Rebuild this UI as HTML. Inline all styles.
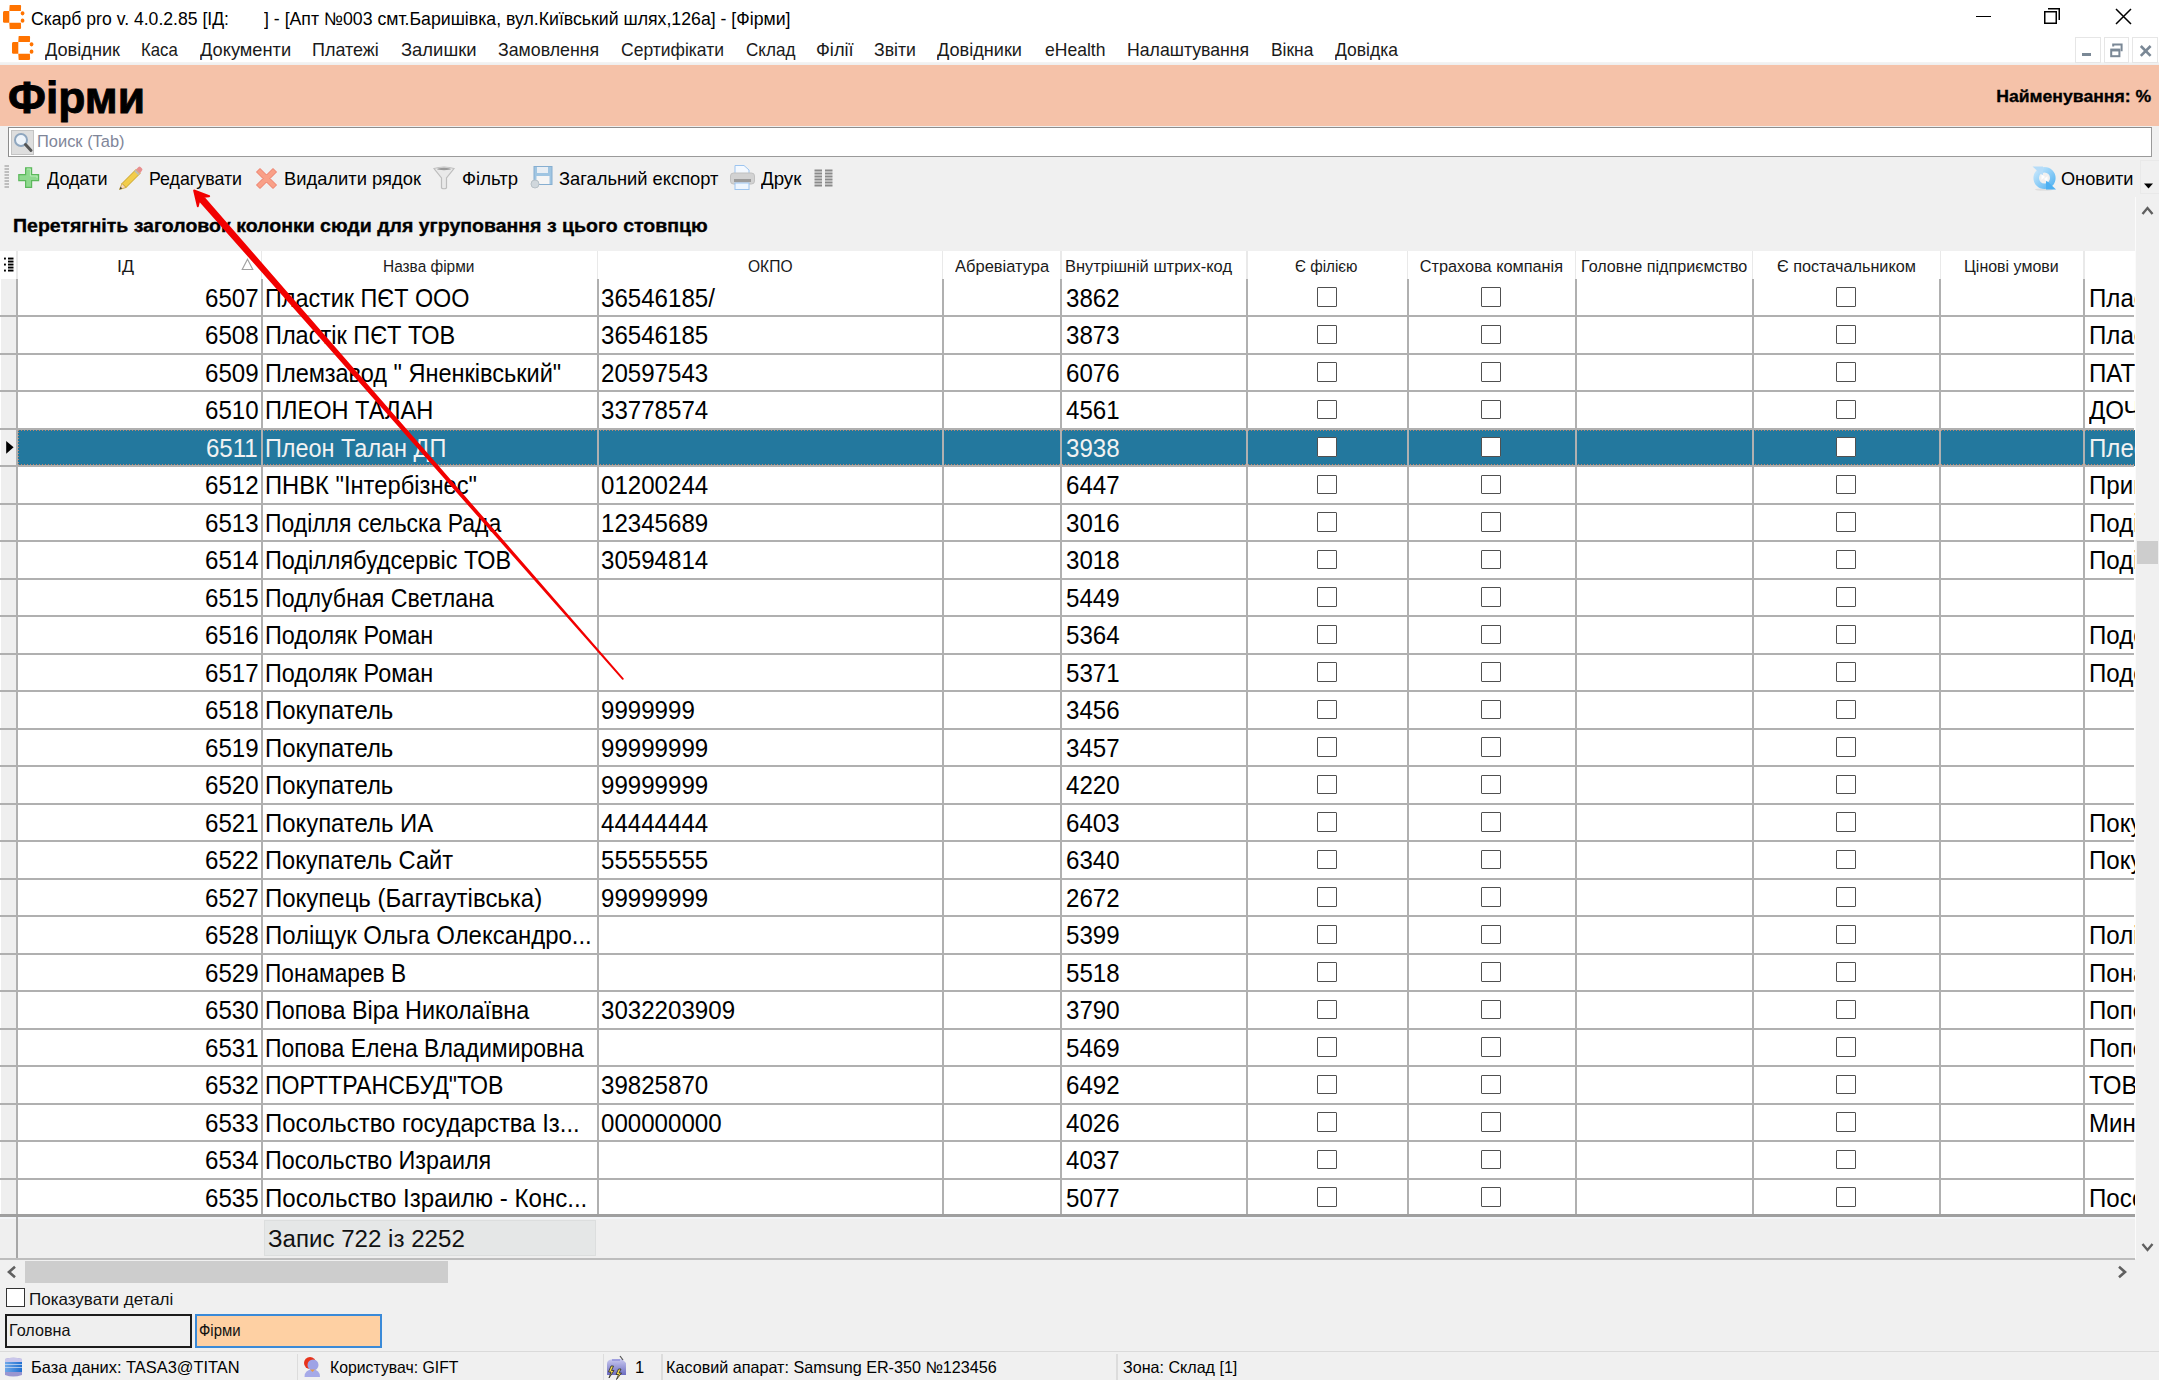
<!DOCTYPE html><html><head><meta charset="utf-8"><style>
*{margin:0;padding:0;box-sizing:border-box}html,body{width:2159px;height:1380px;overflow:hidden;background:#f0f0f0;font-family:"Liberation Sans",sans-serif}
.t{position:absolute;white-space:pre;line-height:1}
</style></head><body>
<div style="position:absolute;left:0px;top:0px;width:2159px;height:62px;background:#fff"></div>
<div style="position:absolute;left:0px;top:62px;width:2159px;height:3px;background:linear-gradient(#f4f4f4,#eeeeee)"></div>
<svg style="position:absolute;left:3.2px;top:4.9px" width="24" height="26" viewBox="0 0 24 26">
<g fill="#ff7300">
<path d="M6.6 0.6 Q6.3 0 7.2 0 H17.2 Q18.2 0 18.1 1 L17.9 6 H6.3 Z"/>
<path d="M6.3 6 V17.8 H1.2 Q0 17.8 0 16.2 V7.6 Q0 6 1.2 6 Z"/>
<path d="M6.3 17.8 H17.9 L18.1 22.8 Q18.2 23.9 17.2 23.9 H7.2 Q6.3 23.9 6.6 23 Z"/>
<rect x="17.7" y="6.2" width="3.7" height="4.2" rx="1.8"/>
<rect x="17.7" y="13.6" width="3.7" height="4.2" rx="1.8"/>
</g></svg>
<div style="position:absolute;left:1976px;top:16px;width:15px;height:1.2px;background:#000"></div>
<svg style="position:absolute;left:2040px;top:4px" width="26" height="24" viewBox="0 0 26 24">
<rect x="4.75" y="7.75" width="11.5" height="11.5" fill="none" stroke="#000" stroke-width="1.5"/>
<path d="M8 4.75 H19.25 V16" fill="none" stroke="#000" stroke-width="1.5"/></svg>
<svg style="position:absolute;left:2112px;top:5px" width="24" height="24" viewBox="0 0 24 24">
<path d="M4 4 L19 19 M19 4 L4 19" stroke="#000" stroke-width="1.5"/></svg>
<svg style="position:absolute;left:11.8px;top:36.4px" width="24" height="26" viewBox="0 0 24 26">
<g fill="#ff7300">
<path d="M6.6 0.6 Q6.3 0 7.2 0 H17.2 Q18.2 0 18.1 1 L17.9 6 H6.3 Z"/>
<path d="M6.3 6 V17.8 H1.2 Q0 17.8 0 16.2 V7.6 Q0 6 1.2 6 Z"/>
<path d="M6.3 17.8 H17.9 L18.1 22.8 Q18.2 23.9 17.2 23.9 H7.2 Q6.3 23.9 6.6 23 Z"/>
<rect x="17.7" y="6.2" width="3.7" height="4.2" rx="1.8"/>
<rect x="17.7" y="13.6" width="3.7" height="4.2" rx="1.8"/>
</g></svg>
<div style="position:absolute;left:2075.2px;top:37.4px;width:25.5px;height:25.2px;border:1.5px solid #e6e6e6;background:#fff"></div>
<div style="position:absolute;left:2103.6px;top:37.4px;width:25.5px;height:25.2px;border:1.5px solid #e6e6e6;background:#fff"></div>
<div style="position:absolute;left:2132.2px;top:37.4px;width:25.5px;height:25.2px;border:1.5px solid #e6e6e6;background:#fff"></div>
<div style="position:absolute;left:2082px;top:53px;width:9px;height:2.8px;background:#7a8896"></div>
<svg style="position:absolute;left:2108px;top:42px" width="18" height="16" viewBox="0 0 18 16">
<g fill="none" stroke="#7a8896">
<path d="M5.2 4.5 V2.6 H13.6 V9.2" stroke-width="2"/>
<rect x="3.2" y="7.6" width="8.2" height="6.6" stroke-width="2"/>
<path d="M3.2 8.2 H11.4" stroke-width="2.5"/></g></svg>
<svg style="position:absolute;left:2138px;top:44px" width="16" height="14" viewBox="0 0 16 14">
<path d="M2.8 2 L12.6 11.8 M12.6 2 L2.8 11.8" stroke="#7a8896" stroke-width="2.6"/></svg>
<div style="position:absolute;left:0px;top:65px;width:2159px;height:61px;background:#f5c2a9"></div>
<div style="position:absolute;left:8px;top:126.8px;width:2144px;height:30px;background:#fff;border:1.5px solid #8c8c8c;border-right-color:#9a9a9a;border-bottom-color:#9a9a9a"></div>
<div style="position:absolute;left:11px;top:130px;width:23px;height:25px;background:#dedede;border:1px solid #c4c4c4"></div>
<svg style="position:absolute;left:12px;top:131px" width="22" height="23" viewBox="0 0 22 23">
<circle cx="9" cy="9" r="6" fill="#eef4fb" stroke="#8ea6bf" stroke-width="2"/>
<path d="M13.5 13.5 L19 19.5" stroke="#555" stroke-width="3" stroke-linecap="round"/></svg>
<svg style="position:absolute;left:4px;top:165px" width="6" height="24" viewBox="0 0 6 24">
<g stroke="#a3a3a3" stroke-width="1.3"><path d="M0.5 1 H5"/><path d="M0.5 4 H5"/><path d="M0.5 7 H5"/><path d="M0.5 10 H5"/><path d="M0.5 13 H5"/><path d="M0.5 16 H5"/><path d="M0.5 19 H5"/><path d="M0.5 22 H5"/></g></svg>
<svg style="position:absolute;left:17.7px;top:167px" width="22" height="22" viewBox="0 0 22 22">
<path d="M7.6 0.8 H13.6 V7.6 H20.6 V13.6 H13.6 V20.4 H7.6 V13.6 H0.8 V7.6 H7.6 Z" fill="#8fd98f" stroke="#5cb85c" stroke-width="1.2"/>
<path d="M9 2 H12.4 V9 H19 V11" fill="none" stroke="#b7ecb7" stroke-width="1"/></svg>
<svg style="position:absolute;left:118px;top:165px" width="26" height="26" viewBox="0 0 26 26">
<path d="M4 18.5 L18 4.5 L22 8.5 L8 22.5 Z" fill="#f2cd4b" stroke="#c9a227" stroke-width="1"/>
<path d="M18 4.5 L20.5 2 Q21.5 1 22.5 2 L24 3.5 Q25 4.5 24 5.5 L22 8.5 Z" fill="#e88f8f"/>
<path d="M17 5.5 L21 9.5" stroke="#bbb" stroke-width="2"/>
<path d="M4 18.5 L1.5 24.5 L8 22.5 Z" fill="#f6d7c0" stroke="#c9a227" stroke-width="0.8"/>
<path d="M1.5 24.5 L2.6 21.8 L4.3 23.4 Z" fill="#444"/></svg>
<svg style="position:absolute;left:254.5px;top:166.5px" width="23" height="23" viewBox="0 0 23 23">
<path d="M1.5 5 L5 1.5 L11.5 8 L18 1.5 L21.5 5 L15 11.5 L21.5 18 L18 21.5 L11.5 15 L5 21.5 L1.5 18 L8 11.5 Z" fill="#f9a087" stroke="#ee7a66" stroke-width="1" stroke-linejoin="round"/></svg>
<svg style="position:absolute;left:433px;top:166px" width="22" height="24" viewBox="0 0 22 24">
<path d="M1 2.5 Q11 -0.5 21 2.5 L13.5 12 V22 Q11 23.5 8.5 22 V12 Z" fill="#e9e9e9" stroke="#bdbdbd" stroke-width="1.2"/>
<ellipse cx="11" cy="3" rx="7" ry="1.2" fill="#9a9a9a"/></svg>
<svg style="position:absolute;left:530px;top:166px" width="23" height="24" viewBox="0 0 23 24">
<rect x="4" y="0.5" width="18" height="18" fill="#9fc5e2" stroke="#86aed0" stroke-width="1"/>
<rect x="7" y="1" width="11" height="6" fill="#e8eef4"/>
<rect x="6.5" y="10" width="13" height="8" fill="#f5f5f5"/>
<circle cx="5" cy="18" r="4" fill="#d0d7dc" stroke="#b7c0c6"/></svg>
<svg style="position:absolute;left:730px;top:165px" width="25" height="26" viewBox="0 0 25 26">
<path d="M5 0.5 H14 L19 5 V10 H5 Z" fill="#f4f9ff" stroke="#9cc4ef" stroke-width="1"/>
<rect x="0.5" y="8" width="24" height="11" rx="3" fill="#d2d2d2" stroke="#c0c0c0"/>
<rect x="4" y="14" width="17" height="3" fill="#9b9b9b"/>
<rect x="5" y="18" width="14" height="6.5" fill="#eef6ff" stroke="#9cc4ef"/></svg>
<svg style="position:absolute;left:814px;top:169px" width="20" height="19" viewBox="0 0 20 19">
<g stroke="#8a8a8a" stroke-width="1.8"><path d="M0.5 1.5 H8 M11 1.5 H18.5"/><path d="M0.5 4.5 H8 M11 4.5 H18.5"/><path d="M0.5 7.5 H8 M11 7.5 H18.5"/><path d="M0.5 10.5 H8 M11 10.5 H18.5"/><path d="M0.5 13.5 H8 M11 13.5 H18.5"/><path d="M0.5 16.5 H8 M11 16.5 H18.5"/></g></svg>
<svg style="position:absolute;left:2031px;top:165px" width="26" height="26" viewBox="0 0 26 26">
<defs><linearGradient id="rfg" x1="0" y1="0" x2="1" y2="1"><stop offset="0" stop-color="#c4e6fc"/><stop offset="1" stop-color="#5ab6f2"/></linearGradient></defs>
<ellipse cx="13" cy="24.6" rx="9" ry="1.1" fill="#dedede"/>
<circle cx="13.5" cy="13" r="8.3" fill="none" stroke="url(#rfg)" stroke-width="5.6"/>
<path d="M1.5 1.5 H12 V11 Z" fill="#b5dcf8"/>
<path d="M25 24.5 H15 V15 Z" fill="#4cb0f2"/>
<path d="M10.5 9 L14 12 L10.5 15 Z" fill="#fff" opacity="0.9"/>
<path d="M16.5 11 L13 14 L16.5 17 Z" fill="#fff" opacity="0.9"/></svg>
<div style="position:absolute;left:2140px;top:160px;width:19px;height:34px;border:1px solid #e9e9e9;border-right:none"></div>
<svg style="position:absolute;left:2143px;top:182px" width="11" height="8" viewBox="0 0 11 8"><path d="M1 1.5 H10 L5.5 6.5 Z" fill="#000"/></svg>
<div style="position:absolute;left:0px;top:250.8px;width:2135.3px;height:28.099999999999966px;background:#fff"></div>
<div style="position:absolute;left:16.4px;top:250.8px;width:1.6px;height:28.099999999999966px;background:#e9e9e9"></div>
<div style="position:absolute;left:260.9px;top:250.8px;width:1.6px;height:28.099999999999966px;background:#e9e9e9"></div>
<div style="position:absolute;left:596.8000000000001px;top:250.8px;width:1.6px;height:28.099999999999966px;background:#e9e9e9"></div>
<div style="position:absolute;left:941.8000000000001px;top:250.8px;width:1.6px;height:28.099999999999966px;background:#e9e9e9"></div>
<div style="position:absolute;left:1060.4px;top:250.8px;width:1.6px;height:28.099999999999966px;background:#e9e9e9"></div>
<div style="position:absolute;left:1246.3px;top:250.8px;width:1.6px;height:28.099999999999966px;background:#e9e9e9"></div>
<div style="position:absolute;left:1406.9px;top:250.8px;width:1.6px;height:28.099999999999966px;background:#e9e9e9"></div>
<div style="position:absolute;left:1574.9px;top:250.8px;width:1.6px;height:28.099999999999966px;background:#e9e9e9"></div>
<div style="position:absolute;left:1751.9px;top:250.8px;width:1.6px;height:28.099999999999966px;background:#e9e9e9"></div>
<div style="position:absolute;left:1939.5px;top:250.8px;width:1.6px;height:28.099999999999966px;background:#e9e9e9"></div>
<div style="position:absolute;left:2083.3999999999996px;top:250.8px;width:1.6px;height:28.099999999999966px;background:#e9e9e9"></div>
<svg style="position:absolute;left:0px;top:255px" width="16" height="20" viewBox="0 0 16 20">
<g fill="#000"><rect x="8" y="2.6" width="5.5" height="1.9"/><rect x="8" y="5.6" width="5.5" height="1.9"/><rect x="8" y="8.6" width="5.5" height="1.9"/><rect x="8" y="11.6" width="5.5" height="1.9"/><rect x="8" y="14.6" width="5.5" height="1.9"/><rect x="4" y="2.6" width="1.9" height="1.9"/><rect x="4" y="8.6" width="1.9" height="1.9"/><rect x="4" y="14.6" width="1.9" height="1.9"/></g></svg>
<svg style="position:absolute;left:240.5px;top:258px" width="13" height="13" viewBox="0 0 13 13">
<path d="M6.5 1.2 L11.8 11.5 H1.2 Z" fill="#fff" stroke="#a0a0a0" stroke-width="1.1"/></svg>
<div style="position:absolute;left:0px;top:278.9px;width:2135.3px;height:937.5000000000001px;background:#fff"></div>
<div style="position:absolute;left:1.2px;top:278.9px;width:15.2px;height:937.5000000000001px;background:#efefef"></div>
<div style="position:absolute;left:18.0px;top:429.7px;width:2117.3px;height:35.9px;background:#23789e"></div>
<div style="position:absolute;left:17.8px;top:429.4px;width:2117.5px;height:1.6px;background:repeating-linear-gradient(90deg,#c4876a 0 1.4px,transparent 1.4px 3px)"></div>
<div style="position:absolute;left:17.8px;top:464.29999999999995px;width:2117.5px;height:1.6px;background:repeating-linear-gradient(90deg,#c4876a 0 1.4px,transparent 1.4px 3px)"></div>
<div style="position:absolute;left:17.8px;top:429.4px;width:1.6px;height:36.5px;background:repeating-linear-gradient(180deg,#c4876a 0 1.4px,transparent 1.4px 3px)"></div>
<div style="position:absolute;left:0px;top:315px;width:2134.3px;height:2px;background:#b0b0b0"></div>
<div style="position:absolute;left:0px;top:353px;width:2134.3px;height:2px;background:#b0b0b0"></div>
<div style="position:absolute;left:0px;top:390px;width:2134.3px;height:2px;background:#b0b0b0"></div>
<div style="position:absolute;left:0px;top:428px;width:2134.3px;height:2px;background:#b0b0b0"></div>
<div style="position:absolute;left:0px;top:465px;width:2134.3px;height:2px;background:#b0b0b0"></div>
<div style="position:absolute;left:0px;top:503px;width:2134.3px;height:2px;background:#b0b0b0"></div>
<div style="position:absolute;left:0px;top:540px;width:2134.3px;height:2px;background:#b0b0b0"></div>
<div style="position:absolute;left:0px;top:578px;width:2134.3px;height:2px;background:#b0b0b0"></div>
<div style="position:absolute;left:0px;top:615px;width:2134.3px;height:2px;background:#b0b0b0"></div>
<div style="position:absolute;left:0px;top:653px;width:2134.3px;height:2px;background:#b0b0b0"></div>
<div style="position:absolute;left:0px;top:690px;width:2134.3px;height:2px;background:#b0b0b0"></div>
<div style="position:absolute;left:0px;top:728px;width:2134.3px;height:2px;background:#b0b0b0"></div>
<div style="position:absolute;left:0px;top:765px;width:2134.3px;height:2px;background:#b0b0b0"></div>
<div style="position:absolute;left:0px;top:803px;width:2134.3px;height:2px;background:#b0b0b0"></div>
<div style="position:absolute;left:0px;top:840px;width:2134.3px;height:2px;background:#b0b0b0"></div>
<div style="position:absolute;left:0px;top:878px;width:2134.3px;height:2px;background:#b0b0b0"></div>
<div style="position:absolute;left:0px;top:915px;width:2134.3px;height:2px;background:#b0b0b0"></div>
<div style="position:absolute;left:0px;top:953px;width:2134.3px;height:2px;background:#b0b0b0"></div>
<div style="position:absolute;left:0px;top:990px;width:2134.3px;height:2px;background:#b0b0b0"></div>
<div style="position:absolute;left:0px;top:1028px;width:2134.3px;height:2px;background:#b0b0b0"></div>
<div style="position:absolute;left:0px;top:1065px;width:2134.3px;height:2px;background:#b0b0b0"></div>
<div style="position:absolute;left:0px;top:1103px;width:2134.3px;height:2px;background:#b0b0b0"></div>
<div style="position:absolute;left:0px;top:1140px;width:2134.3px;height:2px;background:#b0b0b0"></div>
<div style="position:absolute;left:0px;top:1178px;width:2134.3px;height:2px;background:#b0b0b0"></div>
<div style="position:absolute;left:16px;top:278.9px;width:2px;height:937.5000000000001px;background:#b0b0b0"></div>
<div style="position:absolute;left:261px;top:278.9px;width:2px;height:937.5000000000001px;background:#b0b0b0"></div>
<div style="position:absolute;left:597px;top:278.9px;width:2px;height:937.5000000000001px;background:#b0b0b0"></div>
<div style="position:absolute;left:942px;top:278.9px;width:2px;height:937.5000000000001px;background:#b0b0b0"></div>
<div style="position:absolute;left:1060px;top:278.9px;width:2px;height:937.5000000000001px;background:#b0b0b0"></div>
<div style="position:absolute;left:1246px;top:278.9px;width:2px;height:937.5000000000001px;background:#b0b0b0"></div>
<div style="position:absolute;left:1407px;top:278.9px;width:2px;height:937.5000000000001px;background:#b0b0b0"></div>
<div style="position:absolute;left:1575px;top:278.9px;width:2px;height:937.5000000000001px;background:#b0b0b0"></div>
<div style="position:absolute;left:1752px;top:278.9px;width:2px;height:937.5000000000001px;background:#b0b0b0"></div>
<div style="position:absolute;left:1939px;top:278.9px;width:2px;height:937.5000000000001px;background:#b0b0b0"></div>
<div style="position:absolute;left:2083px;top:278.9px;width:2px;height:937.5000000000001px;background:#b0b0b0"></div>
<div style="position:absolute;left:0px;top:1213.9px;width:2135.3px;height:3.4px;background:#9f9f9f"></div>
<svg style="position:absolute;left:5px;top:440.4px" width="10" height="15" viewBox="0 0 10 15">
<path d="M1.2 1 L8.6 7.3 L1.2 13.8 Z" fill="#000"/></svg>
<div style="position:absolute;left:2084px;top:278.9px;width:51.3px;height:37.5px;overflow:hidden"><div class="t" style="left:4.8px;top:6.70px;font-size:25px;color:#000;transform:scaleX(0.964);transform-origin:0 0">Пластик</div></div>
<div style="position:absolute;left:1317.15px;top:287.0px;width:19.5px;height:19.5px;border:1.9px solid #505050;background:#fff;border-radius:1px"></div>
<div style="position:absolute;left:1481.45px;top:287.0px;width:19.5px;height:19.5px;border:1.9px solid #505050;background:#fff;border-radius:1px"></div>
<div style="position:absolute;left:1836.25px;top:287.0px;width:19.5px;height:19.5px;border:1.9px solid #505050;background:#fff;border-radius:1px"></div>
<div style="position:absolute;left:2084px;top:316.4px;width:51.3px;height:37.5px;overflow:hidden"><div class="t" style="left:4.8px;top:6.70px;font-size:25px;color:#000;transform:scaleX(0.964);transform-origin:0 0">Пластік</div></div>
<div style="position:absolute;left:1317.15px;top:324.5px;width:19.5px;height:19.5px;border:1.9px solid #505050;background:#fff;border-radius:1px"></div>
<div style="position:absolute;left:1481.45px;top:324.5px;width:19.5px;height:19.5px;border:1.9px solid #505050;background:#fff;border-radius:1px"></div>
<div style="position:absolute;left:1836.25px;top:324.5px;width:19.5px;height:19.5px;border:1.9px solid #505050;background:#fff;border-radius:1px"></div>
<div style="position:absolute;left:2084px;top:353.9px;width:51.3px;height:37.5px;overflow:hidden"><div class="t" style="left:4.8px;top:6.70px;font-size:25px;color:#000;transform:scaleX(0.964);transform-origin:0 0">ПАТ</div></div>
<div style="position:absolute;left:1317.15px;top:362.0px;width:19.5px;height:19.5px;border:1.9px solid #505050;background:#fff;border-radius:1px"></div>
<div style="position:absolute;left:1481.45px;top:362.0px;width:19.5px;height:19.5px;border:1.9px solid #505050;background:#fff;border-radius:1px"></div>
<div style="position:absolute;left:1836.25px;top:362.0px;width:19.5px;height:19.5px;border:1.9px solid #505050;background:#fff;border-radius:1px"></div>
<div style="position:absolute;left:2084px;top:391.4px;width:51.3px;height:37.5px;overflow:hidden"><div class="t" style="left:4.8px;top:6.70px;font-size:25px;color:#000;transform:scaleX(0.964);transform-origin:0 0">ДОЧ</div></div>
<div style="position:absolute;left:1317.15px;top:399.5px;width:19.5px;height:19.5px;border:1.9px solid #505050;background:#fff;border-radius:1px"></div>
<div style="position:absolute;left:1481.45px;top:399.5px;width:19.5px;height:19.5px;border:1.9px solid #505050;background:#fff;border-radius:1px"></div>
<div style="position:absolute;left:1836.25px;top:399.5px;width:19.5px;height:19.5px;border:1.9px solid #505050;background:#fff;border-radius:1px"></div>
<div style="position:absolute;left:2084px;top:428.9px;width:51.3px;height:37.5px;overflow:hidden"><div class="t" style="left:4.8px;top:6.70px;font-size:25px;color:#f2f2f2;transform:scaleX(0.964);transform-origin:0 0">Плеон</div></div>
<div style="position:absolute;left:1317.15px;top:437.0px;width:19.5px;height:19.5px;border:1.9px solid #505050;background:#fff;border-radius:1px"></div>
<div style="position:absolute;left:1481.45px;top:437.0px;width:19.5px;height:19.5px;border:1.9px solid #505050;background:#fff;border-radius:1px"></div>
<div style="position:absolute;left:1836.25px;top:437.0px;width:19.5px;height:19.5px;border:1.9px solid #505050;background:#fff;border-radius:1px"></div>
<div style="position:absolute;left:2084px;top:466.4px;width:51.3px;height:37.5px;overflow:hidden"><div class="t" style="left:4.8px;top:6.70px;font-size:25px;color:#000;transform:scaleX(0.964);transform-origin:0 0">Приват</div></div>
<div style="position:absolute;left:1317.15px;top:474.5px;width:19.5px;height:19.5px;border:1.9px solid #505050;background:#fff;border-radius:1px"></div>
<div style="position:absolute;left:1481.45px;top:474.5px;width:19.5px;height:19.5px;border:1.9px solid #505050;background:#fff;border-radius:1px"></div>
<div style="position:absolute;left:1836.25px;top:474.5px;width:19.5px;height:19.5px;border:1.9px solid #505050;background:#fff;border-radius:1px"></div>
<div style="position:absolute;left:2084px;top:503.9px;width:51.3px;height:37.5px;overflow:hidden"><div class="t" style="left:4.8px;top:6.70px;font-size:25px;color:#000;transform:scaleX(0.964);transform-origin:0 0">Поділля</div></div>
<div style="position:absolute;left:1317.15px;top:512.0px;width:19.5px;height:19.5px;border:1.9px solid #505050;background:#fff;border-radius:1px"></div>
<div style="position:absolute;left:1481.45px;top:512.0px;width:19.5px;height:19.5px;border:1.9px solid #505050;background:#fff;border-radius:1px"></div>
<div style="position:absolute;left:1836.25px;top:512.0px;width:19.5px;height:19.5px;border:1.9px solid #505050;background:#fff;border-radius:1px"></div>
<div style="position:absolute;left:2084px;top:541.4px;width:51.3px;height:37.5px;overflow:hidden"><div class="t" style="left:4.8px;top:6.70px;font-size:25px;color:#000;transform:scaleX(0.964);transform-origin:0 0">Поділля</div></div>
<div style="position:absolute;left:1317.15px;top:549.5px;width:19.5px;height:19.5px;border:1.9px solid #505050;background:#fff;border-radius:1px"></div>
<div style="position:absolute;left:1481.45px;top:549.5px;width:19.5px;height:19.5px;border:1.9px solid #505050;background:#fff;border-radius:1px"></div>
<div style="position:absolute;left:1836.25px;top:549.5px;width:19.5px;height:19.5px;border:1.9px solid #505050;background:#fff;border-radius:1px"></div>
<div style="position:absolute;left:1317.15px;top:587.0px;width:19.5px;height:19.5px;border:1.9px solid #505050;background:#fff;border-radius:1px"></div>
<div style="position:absolute;left:1481.45px;top:587.0px;width:19.5px;height:19.5px;border:1.9px solid #505050;background:#fff;border-radius:1px"></div>
<div style="position:absolute;left:1836.25px;top:587.0px;width:19.5px;height:19.5px;border:1.9px solid #505050;background:#fff;border-radius:1px"></div>
<div style="position:absolute;left:2084px;top:616.4px;width:51.3px;height:37.5px;overflow:hidden"><div class="t" style="left:4.8px;top:6.70px;font-size:25px;color:#000;transform:scaleX(0.964);transform-origin:0 0">Подоляк</div></div>
<div style="position:absolute;left:1317.15px;top:624.5px;width:19.5px;height:19.5px;border:1.9px solid #505050;background:#fff;border-radius:1px"></div>
<div style="position:absolute;left:1481.45px;top:624.5px;width:19.5px;height:19.5px;border:1.9px solid #505050;background:#fff;border-radius:1px"></div>
<div style="position:absolute;left:1836.25px;top:624.5px;width:19.5px;height:19.5px;border:1.9px solid #505050;background:#fff;border-radius:1px"></div>
<div style="position:absolute;left:2084px;top:653.9px;width:51.3px;height:37.5px;overflow:hidden"><div class="t" style="left:4.8px;top:6.70px;font-size:25px;color:#000;transform:scaleX(0.964);transform-origin:0 0">Подоляк</div></div>
<div style="position:absolute;left:1317.15px;top:662.0px;width:19.5px;height:19.5px;border:1.9px solid #505050;background:#fff;border-radius:1px"></div>
<div style="position:absolute;left:1481.45px;top:662.0px;width:19.5px;height:19.5px;border:1.9px solid #505050;background:#fff;border-radius:1px"></div>
<div style="position:absolute;left:1836.25px;top:662.0px;width:19.5px;height:19.5px;border:1.9px solid #505050;background:#fff;border-radius:1px"></div>
<div style="position:absolute;left:1317.15px;top:699.5px;width:19.5px;height:19.5px;border:1.9px solid #505050;background:#fff;border-radius:1px"></div>
<div style="position:absolute;left:1481.45px;top:699.5px;width:19.5px;height:19.5px;border:1.9px solid #505050;background:#fff;border-radius:1px"></div>
<div style="position:absolute;left:1836.25px;top:699.5px;width:19.5px;height:19.5px;border:1.9px solid #505050;background:#fff;border-radius:1px"></div>
<div style="position:absolute;left:1317.15px;top:737.0px;width:19.5px;height:19.5px;border:1.9px solid #505050;background:#fff;border-radius:1px"></div>
<div style="position:absolute;left:1481.45px;top:737.0px;width:19.5px;height:19.5px;border:1.9px solid #505050;background:#fff;border-radius:1px"></div>
<div style="position:absolute;left:1836.25px;top:737.0px;width:19.5px;height:19.5px;border:1.9px solid #505050;background:#fff;border-radius:1px"></div>
<div style="position:absolute;left:1317.15px;top:774.5px;width:19.5px;height:19.5px;border:1.9px solid #505050;background:#fff;border-radius:1px"></div>
<div style="position:absolute;left:1481.45px;top:774.5px;width:19.5px;height:19.5px;border:1.9px solid #505050;background:#fff;border-radius:1px"></div>
<div style="position:absolute;left:1836.25px;top:774.5px;width:19.5px;height:19.5px;border:1.9px solid #505050;background:#fff;border-radius:1px"></div>
<div style="position:absolute;left:2084px;top:803.9px;width:51.3px;height:37.5px;overflow:hidden"><div class="t" style="left:4.8px;top:6.70px;font-size:25px;color:#000;transform:scaleX(0.964);transform-origin:0 0">Покупатель</div></div>
<div style="position:absolute;left:1317.15px;top:812.0px;width:19.5px;height:19.5px;border:1.9px solid #505050;background:#fff;border-radius:1px"></div>
<div style="position:absolute;left:1481.45px;top:812.0px;width:19.5px;height:19.5px;border:1.9px solid #505050;background:#fff;border-radius:1px"></div>
<div style="position:absolute;left:1836.25px;top:812.0px;width:19.5px;height:19.5px;border:1.9px solid #505050;background:#fff;border-radius:1px"></div>
<div style="position:absolute;left:2084px;top:841.4px;width:51.3px;height:37.5px;overflow:hidden"><div class="t" style="left:4.8px;top:6.70px;font-size:25px;color:#000;transform:scaleX(0.964);transform-origin:0 0">Покупатель</div></div>
<div style="position:absolute;left:1317.15px;top:849.5px;width:19.5px;height:19.5px;border:1.9px solid #505050;background:#fff;border-radius:1px"></div>
<div style="position:absolute;left:1481.45px;top:849.5px;width:19.5px;height:19.5px;border:1.9px solid #505050;background:#fff;border-radius:1px"></div>
<div style="position:absolute;left:1836.25px;top:849.5px;width:19.5px;height:19.5px;border:1.9px solid #505050;background:#fff;border-radius:1px"></div>
<div style="position:absolute;left:1317.15px;top:887.0px;width:19.5px;height:19.5px;border:1.9px solid #505050;background:#fff;border-radius:1px"></div>
<div style="position:absolute;left:1481.45px;top:887.0px;width:19.5px;height:19.5px;border:1.9px solid #505050;background:#fff;border-radius:1px"></div>
<div style="position:absolute;left:1836.25px;top:887.0px;width:19.5px;height:19.5px;border:1.9px solid #505050;background:#fff;border-radius:1px"></div>
<div style="position:absolute;left:2084px;top:916.4px;width:51.3px;height:37.5px;overflow:hidden"><div class="t" style="left:4.8px;top:6.70px;font-size:25px;color:#000;transform:scaleX(0.964);transform-origin:0 0">Поліщук</div></div>
<div style="position:absolute;left:1317.15px;top:924.5px;width:19.5px;height:19.5px;border:1.9px solid #505050;background:#fff;border-radius:1px"></div>
<div style="position:absolute;left:1481.45px;top:924.5px;width:19.5px;height:19.5px;border:1.9px solid #505050;background:#fff;border-radius:1px"></div>
<div style="position:absolute;left:1836.25px;top:924.5px;width:19.5px;height:19.5px;border:1.9px solid #505050;background:#fff;border-radius:1px"></div>
<div style="position:absolute;left:2084px;top:953.9px;width:51.3px;height:37.5px;overflow:hidden"><div class="t" style="left:4.8px;top:6.70px;font-size:25px;color:#000;transform:scaleX(0.964);transform-origin:0 0">Понамарев</div></div>
<div style="position:absolute;left:1317.15px;top:962.0px;width:19.5px;height:19.5px;border:1.9px solid #505050;background:#fff;border-radius:1px"></div>
<div style="position:absolute;left:1481.45px;top:962.0px;width:19.5px;height:19.5px;border:1.9px solid #505050;background:#fff;border-radius:1px"></div>
<div style="position:absolute;left:1836.25px;top:962.0px;width:19.5px;height:19.5px;border:1.9px solid #505050;background:#fff;border-radius:1px"></div>
<div style="position:absolute;left:2084px;top:991.4px;width:51.3px;height:37.5px;overflow:hidden"><div class="t" style="left:4.8px;top:6.70px;font-size:25px;color:#000;transform:scaleX(0.964);transform-origin:0 0">Попова</div></div>
<div style="position:absolute;left:1317.15px;top:999.5px;width:19.5px;height:19.5px;border:1.9px solid #505050;background:#fff;border-radius:1px"></div>
<div style="position:absolute;left:1481.45px;top:999.5px;width:19.5px;height:19.5px;border:1.9px solid #505050;background:#fff;border-radius:1px"></div>
<div style="position:absolute;left:1836.25px;top:999.5px;width:19.5px;height:19.5px;border:1.9px solid #505050;background:#fff;border-radius:1px"></div>
<div style="position:absolute;left:2084px;top:1028.9px;width:51.3px;height:37.5px;overflow:hidden"><div class="t" style="left:4.8px;top:6.70px;font-size:25px;color:#000;transform:scaleX(0.964);transform-origin:0 0">Попова</div></div>
<div style="position:absolute;left:1317.15px;top:1037.0px;width:19.5px;height:19.5px;border:1.9px solid #505050;background:#fff;border-radius:1px"></div>
<div style="position:absolute;left:1481.45px;top:1037.0px;width:19.5px;height:19.5px;border:1.9px solid #505050;background:#fff;border-radius:1px"></div>
<div style="position:absolute;left:1836.25px;top:1037.0px;width:19.5px;height:19.5px;border:1.9px solid #505050;background:#fff;border-radius:1px"></div>
<div style="position:absolute;left:2084px;top:1066.4px;width:51.3px;height:37.5px;overflow:hidden"><div class="t" style="left:4.8px;top:6.70px;font-size:25px;color:#000;transform:scaleX(0.964);transform-origin:0 0">ТОВ</div></div>
<div style="position:absolute;left:1317.15px;top:1074.5px;width:19.5px;height:19.5px;border:1.9px solid #505050;background:#fff;border-radius:1px"></div>
<div style="position:absolute;left:1481.45px;top:1074.5px;width:19.5px;height:19.5px;border:1.9px solid #505050;background:#fff;border-radius:1px"></div>
<div style="position:absolute;left:1836.25px;top:1074.5px;width:19.5px;height:19.5px;border:1.9px solid #505050;background:#fff;border-radius:1px"></div>
<div style="position:absolute;left:2084px;top:1103.9px;width:51.3px;height:37.5px;overflow:hidden"><div class="t" style="left:4.8px;top:6.70px;font-size:25px;color:#000;transform:scaleX(0.964);transform-origin:0 0">Министерство</div></div>
<div style="position:absolute;left:1317.15px;top:1112.0px;width:19.5px;height:19.5px;border:1.9px solid #505050;background:#fff;border-radius:1px"></div>
<div style="position:absolute;left:1481.45px;top:1112.0px;width:19.5px;height:19.5px;border:1.9px solid #505050;background:#fff;border-radius:1px"></div>
<div style="position:absolute;left:1836.25px;top:1112.0px;width:19.5px;height:19.5px;border:1.9px solid #505050;background:#fff;border-radius:1px"></div>
<div style="position:absolute;left:1317.15px;top:1149.5px;width:19.5px;height:19.5px;border:1.9px solid #505050;background:#fff;border-radius:1px"></div>
<div style="position:absolute;left:1481.45px;top:1149.5px;width:19.5px;height:19.5px;border:1.9px solid #505050;background:#fff;border-radius:1px"></div>
<div style="position:absolute;left:1836.25px;top:1149.5px;width:19.5px;height:19.5px;border:1.9px solid #505050;background:#fff;border-radius:1px"></div>
<div style="position:absolute;left:2084px;top:1178.9px;width:51.3px;height:37.5px;overflow:hidden"><div class="t" style="left:4.8px;top:6.70px;font-size:25px;color:#000;transform:scaleX(0.964);transform-origin:0 0">Посольство</div></div>
<div style="position:absolute;left:1317.15px;top:1187.0px;width:19.5px;height:19.5px;border:1.9px solid #505050;background:#fff;border-radius:1px"></div>
<div style="position:absolute;left:1481.45px;top:1187.0px;width:19.5px;height:19.5px;border:1.9px solid #505050;background:#fff;border-radius:1px"></div>
<div style="position:absolute;left:1836.25px;top:1187.0px;width:19.5px;height:19.5px;border:1.9px solid #505050;background:#fff;border-radius:1px"></div>
<div style="position:absolute;left:2135.3px;top:197.4px;width:23.699999999999818px;height:1061.6px;background:#f0f0f0;border-left:1px solid #fbfbfb"></div>
<svg style="position:absolute;left:2141px;top:205px" width="13" height="11" viewBox="0 0 13 11">
<path d="M1.5 9 L6.5 3 L11.5 9" fill="none" stroke="#606060" stroke-width="2.4"/></svg>
<svg style="position:absolute;left:2141px;top:1241.5px" width="13" height="11" viewBox="0 0 13 11">
<path d="M1.5 2 L6.5 8 L11.5 2" fill="none" stroke="#606060" stroke-width="2.4"/></svg>
<div style="position:absolute;left:2136.5px;top:541px;width:21.5px;height:23px;background:#cdcdcd"></div>
<div style="position:absolute;left:0px;top:1217.3px;width:2135.3px;height:40.90000000000009px;background:#efefef"></div>
<div style="position:absolute;left:0px;top:1217.3px;width:2135.3px;height:1.5px;background:#f3f5f8"></div>
<div style="position:absolute;left:16.4px;top:1217.4px;width:1.6px;height:40.799999999999955px;background:#a6a6a6"></div>
<div style="position:absolute;left:264px;top:1219.5px;width:332px;height:36px;background:#e5e7e7;border:1px solid #dcdede"></div>
<div style="position:absolute;left:0px;top:1258px;width:2135.3px;height:1.5px;background:#bdbdbd"></div>
<div style="position:absolute;left:25.4px;top:1261px;width:423px;height:22.3px;background:#cdcdcd"></div>
<svg style="position:absolute;left:5px;top:1265px" width="14" height="14" viewBox="0 0 14 14">
<path d="M10 1.8 L4 7 L10 12.2" fill="none" stroke="#606060" stroke-width="2.6"/></svg>
<svg style="position:absolute;left:2115px;top:1265px" width="14" height="14" viewBox="0 0 14 14">
<path d="M4 1.8 L10 7 L4 12.2" fill="none" stroke="#606060" stroke-width="2.6"/></svg>
<div style="position:absolute;left:5.9px;top:1288.2px;width:19.2px;height:19.2px;border:1.6px solid #333;background:#fff"></div>
<div style="position:absolute;left:4.6px;top:1314px;width:187.1px;height:33.6px;border:2px solid #1c1c1c;background:#efefef"></div>
<div style="position:absolute;left:195px;top:1314px;width:187px;height:33.6px;border:2px solid #3a8ad8;background:#fed0a3"></div>
<div style="position:absolute;left:0px;top:1350.8px;width:2159px;height:1.5px;background:#dadada"></div>
<div style="position:absolute;left:296.90000000000003px;top:1354px;width:1.4px;height:26px;background:#dcdcdc"></div>
<div style="position:absolute;left:603.0px;top:1354px;width:1.4px;height:26px;background:#dcdcdc"></div>
<div style="position:absolute;left:661.3px;top:1354px;width:1.4px;height:26px;background:#dcdcdc"></div>
<div style="position:absolute;left:1116.3px;top:1354px;width:1.4px;height:26px;background:#dcdcdc"></div>
<svg style="position:absolute;left:4px;top:1357px" width="19" height="21" viewBox="0 0 19 21">
<defs><linearGradient id="dbg" x1="0" x2="1"><stop offset="0" stop-color="#6fa8e8"/><stop offset="1" stop-color="#1f6fd0"/></linearGradient></defs>
<path d="M1 2 Q9 -0.5 18 2 V18 Q9 21 1 18 Z" fill="#9a96d0"/>
<rect x="1" y="5" width="17" height="10" fill="url(#dbg)"/>
<path d="M1 7.5 H18 M1 10.5 H18" stroke="#c8d8f0" stroke-width="0.8"/>
<path d="M1 2 Q9 -0.5 18 2 V5 H1 Z" fill="#c9c6ea"/></svg>
<svg style="position:absolute;left:303px;top:1356px" width="18" height="22" viewBox="0 0 18 22">
<circle cx="7" cy="7" r="6" fill="#e8331b"/>
<circle cx="10" cy="9" r="5.5" fill="#9ea3e6"/>
<path d="M1.5 21 Q1.5 13.5 9.5 13.5 Q17 13.5 17 21 Z" fill="#a6aae8"/>
<path d="M7 13.6 H12 L9.5 16 Z" fill="#e89a4a"/></svg>
<svg style="position:absolute;left:606px;top:1355px" width="22" height="25" viewBox="0 0 22 25">
<defs><linearGradient id="crg" x1="0" y1="0" x2="0" y2="1"><stop offset="0" stop-color="#c9c9f0"/><stop offset="1" stop-color="#6c6cc0"/></linearGradient></defs>
<path d="M1 9 Q1 5 5 4.5 L16 4 L20 8 V20 H1 Z" fill="url(#crg)"/>
<path d="M6 5 H14" stroke="#8f8fd8" stroke-width="1.5"/>
<path d="M14 1 L17 5" stroke="#555" stroke-width="1.2"/>
<path d="M5 11 L2.5 17 L5 17 L3 23 L8 15.5 L5.5 15.5 L7.5 11 Z" fill="#f4dc4a" stroke="#2a2a2a" stroke-width="0.8"/>
<path d="M12.5 14 L10 19.5 L12.5 19.5 L10.5 24.5 L15.5 18 L13 18 L15 14 Z" fill="#f4dc4a" stroke="#2a2a2a" stroke-width="0.8"/></svg>
<div class="t" style="top:10.00px;font-size:18px;color:#000;left:31.30px;transform:scaleX(0.9776);transform-origin:0 0;">Скарб pro v. 4.0.2.85 [ІД:</div>
<div class="t" style="top:10.00px;font-size:18px;color:#000;left:264.00px;transform:scaleX(0.9831);transform-origin:0 0;">] - [Апт №003 смт.Баришівка, вул.Київський шлях,126а] - [Фірми]</div>
<div class="t" style="top:41.20px;font-size:18.5px;color:#1a1a1a;left:45.30px;transform:scaleX(0.9816);transform-origin:0 0;">Довідник</div>
<div class="t" style="top:41.20px;font-size:18.5px;color:#1a1a1a;left:141.20px;transform:scaleX(0.9062);transform-origin:0 0;">Каса</div>
<div class="t" style="top:41.20px;font-size:18.5px;color:#1a1a1a;left:199.50px;transform:scaleX(0.9859);transform-origin:0 0;">Документи</div>
<div class="t" style="top:41.20px;font-size:18.5px;color:#1a1a1a;left:312.00px;transform:scaleX(0.9708);transform-origin:0 0;">Платежі</div>
<div class="t" style="top:41.20px;font-size:18.5px;color:#1a1a1a;left:400.50px;transform:scaleX(0.9951);transform-origin:0 0;">Залишки</div>
<div class="t" style="top:41.20px;font-size:18.5px;color:#1a1a1a;left:497.80px;transform:scaleX(0.9600);transform-origin:0 0;">Замовлення</div>
<div class="t" style="top:41.20px;font-size:18.5px;color:#1a1a1a;left:621.00px;transform:scaleX(0.9462);transform-origin:0 0;">Сертифікати</div>
<div class="t" style="top:41.20px;font-size:18.5px;color:#1a1a1a;left:745.60px;transform:scaleX(0.9226);transform-origin:0 0;">Склад</div>
<div class="t" style="top:41.20px;font-size:18.5px;color:#1a1a1a;left:816.00px;transform:scaleX(0.9860);transform-origin:0 0;">Філії</div>
<div class="t" style="top:41.20px;font-size:18.5px;color:#1a1a1a;left:874.00px;transform:scaleX(0.9562);transform-origin:0 0;">Звіти</div>
<div class="t" style="top:41.20px;font-size:18.5px;color:#1a1a1a;left:937.00px;transform:scaleX(0.9798);transform-origin:0 0;">Довідники</div>
<div class="t" style="top:41.20px;font-size:18.5px;color:#1a1a1a;left:1044.60px;transform:scaleX(0.9472);transform-origin:0 0;">eHealth</div>
<div class="t" style="top:41.20px;font-size:18.5px;color:#1a1a1a;left:1126.80px;transform:scaleX(0.9556);transform-origin:0 0;">Налаштування</div>
<div class="t" style="top:41.20px;font-size:18.5px;color:#1a1a1a;left:1270.60px;transform:scaleX(0.9409);transform-origin:0 0;">Вікна</div>
<div class="t" style="top:41.20px;font-size:18.5px;color:#1a1a1a;left:1334.70px;transform:scaleX(0.9450);transform-origin:0 0;">Довідка</div>
<div class="t" style="top:75.80px;font-size:44px;color:#000;font-weight:700;left:8.00px;transform:scaleX(1.0097);transform-origin:0 0;-webkit-text-stroke:0.9px #000;">Фірми</div>
<div class="t" style="top:88.30px;font-size:16.5px;color:#000;font-weight:700;right:7.40px;transform:scaleX(1.0676);transform-origin:100% 0;-webkit-text-stroke:0.3px #000;">Найменування: %</div>
<div class="t" style="top:134.20px;font-size:16.8px;color:#7f8699;left:37.00px;transform:scaleX(0.9798);transform-origin:0 0;">Поиск (Tab)</div>
<div class="t" style="top:169.70px;font-size:18.5px;color:#000;left:46.50px;transform:scaleX(0.9741);transform-origin:0 0;">Додати</div>
<div class="t" style="top:169.70px;font-size:18.5px;color:#000;left:149.00px;transform:scaleX(0.9606);transform-origin:0 0;">Редагувати</div>
<div class="t" style="top:169.70px;font-size:18.5px;color:#000;left:284.00px;transform:scaleX(0.9920);transform-origin:0 0;">Видалити рядок</div>
<div class="t" style="top:169.70px;font-size:18.5px;color:#000;left:462.00px;">Фільтр</div>
<div class="t" style="top:169.70px;font-size:18.5px;color:#000;left:559.40px;transform:scaleX(0.9897);transform-origin:0 0;">Загальний експорт</div>
<div class="t" style="top:169.70px;font-size:18.5px;color:#000;left:760.60px;transform:scaleX(1.0108);transform-origin:0 0;">Друк</div>
<div class="t" style="top:169.70px;font-size:18.5px;color:#000;left:2061.00px;transform:scaleX(0.9814);transform-origin:0 0;">Оновити</div>
<div class="t" style="top:215.50px;font-size:19px;color:#000;font-weight:700;left:12.60px;transform:scaleX(1.0270);transform-origin:0 0;-webkit-text-stroke:0.35px #000;">Перетягніть заголовок колонки сюди для угруповання з цього стовпцю</div>
<div class="t" style="top:258.10px;font-size:16.3px;color:#1a1a1a;left:116.50px;transform:scaleX(1.0924);transform-origin:0 0;">ІД</div>
<div class="t" style="top:258.10px;font-size:16.3px;color:#1a1a1a;left:382.60px;transform:scaleX(0.9472);transform-origin:0 0;">Назва фірми</div>
<div class="t" style="top:258.10px;font-size:16.3px;color:#1a1a1a;left:747.80px;transform:scaleX(0.9567);transform-origin:0 0;">ОКПО</div>
<div class="t" style="top:258.10px;font-size:16.3px;color:#1a1a1a;left:954.80px;transform:scaleX(1.0132);transform-origin:0 0;">Абревіатура</div>
<div class="t" style="top:258.10px;font-size:16.3px;color:#1a1a1a;left:1065.40px;transform:scaleX(1.0112);transform-origin:0 0;">Внутрішній штрих-код</div>
<div class="t" style="top:258.10px;font-size:16.3px;color:#1a1a1a;left:1295.30px;transform:scaleX(0.9331);transform-origin:0 0;">Є філією</div>
<div class="t" style="top:258.10px;font-size:16.3px;color:#1a1a1a;left:1419.80px;">Страхова компанія</div>
<div class="t" style="top:258.10px;font-size:16.3px;color:#1a1a1a;left:1581.30px;transform:scaleX(0.9904);transform-origin:0 0;">Головне підприємство</div>
<div class="t" style="top:258.10px;font-size:16.3px;color:#1a1a1a;left:1777.00px;transform:scaleX(0.9966);transform-origin:0 0;">Є постачальником</div>
<div class="t" style="top:258.10px;font-size:16.3px;color:#1a1a1a;left:1963.70px;transform:scaleX(0.9818);transform-origin:0 0;">Цінові умови</div>
<div class="t" style="top:285.60px;font-size:25px;color:#000;right:1900.80px;transform:scaleX(0.9640);transform-origin:100% 0;">6507</div>
<div class="t" style="top:285.60px;font-size:25px;color:#000;left:265.30px;transform:scaleX(0.9344);transform-origin:0 0;">Пластик ПЄТ ООО</div>
<div class="t" style="top:285.60px;font-size:25px;color:#000;left:601.30px;transform:scaleX(0.9640);transform-origin:0 0;">36546185/</div>
<div class="t" style="top:285.60px;font-size:25px;color:#000;left:1065.70px;transform:scaleX(0.9640);transform-origin:0 0;">3862</div>
<div class="t" style="top:323.10px;font-size:25px;color:#000;right:1900.80px;transform:scaleX(0.9640);transform-origin:100% 0;">6508</div>
<div class="t" style="top:323.10px;font-size:25px;color:#000;left:265.30px;transform:scaleX(0.9403);transform-origin:0 0;">Пластік ПЄТ ТОВ</div>
<div class="t" style="top:323.10px;font-size:25px;color:#000;left:601.30px;transform:scaleX(0.9640);transform-origin:0 0;">36546185</div>
<div class="t" style="top:323.10px;font-size:25px;color:#000;left:1065.70px;transform:scaleX(0.9640);transform-origin:0 0;">3873</div>
<div class="t" style="top:360.60px;font-size:25px;color:#000;right:1900.80px;transform:scaleX(0.9640);transform-origin:100% 0;">6509</div>
<div class="t" style="top:360.60px;font-size:25px;color:#000;left:265.30px;transform:scaleX(0.9410);transform-origin:0 0;">Племзавод &quot; Яненківський&quot;</div>
<div class="t" style="top:360.60px;font-size:25px;color:#000;left:601.30px;transform:scaleX(0.9640);transform-origin:0 0;">20597543</div>
<div class="t" style="top:360.60px;font-size:25px;color:#000;left:1065.70px;transform:scaleX(0.9640);transform-origin:0 0;">6076</div>
<div class="t" style="top:398.10px;font-size:25px;color:#000;right:1900.80px;transform:scaleX(0.9640);transform-origin:100% 0;">6510</div>
<div class="t" style="top:398.10px;font-size:25px;color:#000;left:265.30px;transform:scaleX(0.9434);transform-origin:0 0;">ПЛЕОН ТАЛАН</div>
<div class="t" style="top:398.10px;font-size:25px;color:#000;left:601.30px;transform:scaleX(0.9640);transform-origin:0 0;">33778574</div>
<div class="t" style="top:398.10px;font-size:25px;color:#000;left:1065.70px;transform:scaleX(0.9640);transform-origin:0 0;">4561</div>
<div class="t" style="top:435.60px;font-size:25px;color:#f2f2f2;right:1900.80px;transform:scaleX(0.9640);transform-origin:100% 0;">6511</div>
<div class="t" style="top:435.60px;font-size:25px;color:#f2f2f2;left:265.30px;transform:scaleX(0.9379);transform-origin:0 0;">Плеон Талан ДП</div>
<div class="t" style="top:435.60px;font-size:25px;color:#f2f2f2;left:1065.70px;transform:scaleX(0.9640);transform-origin:0 0;">3938</div>
<div class="t" style="top:473.10px;font-size:25px;color:#000;right:1900.80px;transform:scaleX(0.9640);transform-origin:100% 0;">6512</div>
<div class="t" style="top:473.10px;font-size:25px;color:#000;left:265.30px;transform:scaleX(0.9497);transform-origin:0 0;">ПНВК &quot;Інтербізнес&quot;</div>
<div class="t" style="top:473.10px;font-size:25px;color:#000;left:601.30px;transform:scaleX(0.9640);transform-origin:0 0;">01200244</div>
<div class="t" style="top:473.10px;font-size:25px;color:#000;left:1065.70px;transform:scaleX(0.9640);transform-origin:0 0;">6447</div>
<div class="t" style="top:510.60px;font-size:25px;color:#000;right:1900.80px;transform:scaleX(0.9640);transform-origin:100% 0;">6513</div>
<div class="t" style="top:510.60px;font-size:25px;color:#000;left:265.30px;transform:scaleX(0.9177);transform-origin:0 0;">Поділля сельска Рада</div>
<div class="t" style="top:510.60px;font-size:25px;color:#000;left:601.30px;transform:scaleX(0.9640);transform-origin:0 0;">12345689</div>
<div class="t" style="top:510.60px;font-size:25px;color:#000;left:1065.70px;transform:scaleX(0.9640);transform-origin:0 0;">3016</div>
<div class="t" style="top:548.10px;font-size:25px;color:#000;right:1900.80px;transform:scaleX(0.9640);transform-origin:100% 0;">6514</div>
<div class="t" style="top:548.10px;font-size:25px;color:#000;left:265.30px;transform:scaleX(0.9351);transform-origin:0 0;">Поділлябудсервіс ТОВ</div>
<div class="t" style="top:548.10px;font-size:25px;color:#000;left:601.30px;transform:scaleX(0.9640);transform-origin:0 0;">30594814</div>
<div class="t" style="top:548.10px;font-size:25px;color:#000;left:1065.70px;transform:scaleX(0.9640);transform-origin:0 0;">3018</div>
<div class="t" style="top:585.60px;font-size:25px;color:#000;right:1900.80px;transform:scaleX(0.9640);transform-origin:100% 0;">6515</div>
<div class="t" style="top:585.60px;font-size:25px;color:#000;left:265.30px;transform:scaleX(0.9262);transform-origin:0 0;">Подлубная Светлана</div>
<div class="t" style="top:585.60px;font-size:25px;color:#000;left:1065.70px;transform:scaleX(0.9640);transform-origin:0 0;">5449</div>
<div class="t" style="top:623.10px;font-size:25px;color:#000;right:1900.80px;transform:scaleX(0.9640);transform-origin:100% 0;">6516</div>
<div class="t" style="top:623.10px;font-size:25px;color:#000;left:265.30px;transform:scaleX(0.9362);transform-origin:0 0;">Подоляк Роман</div>
<div class="t" style="top:623.10px;font-size:25px;color:#000;left:1065.70px;transform:scaleX(0.9640);transform-origin:0 0;">5364</div>
<div class="t" style="top:660.60px;font-size:25px;color:#000;right:1900.80px;transform:scaleX(0.9640);transform-origin:100% 0;">6517</div>
<div class="t" style="top:660.60px;font-size:25px;color:#000;left:265.30px;transform:scaleX(0.9362);transform-origin:0 0;">Подоляк Роман</div>
<div class="t" style="top:660.60px;font-size:25px;color:#000;left:1065.70px;transform:scaleX(0.9640);transform-origin:0 0;">5371</div>
<div class="t" style="top:698.10px;font-size:25px;color:#000;right:1900.80px;transform:scaleX(0.9640);transform-origin:100% 0;">6518</div>
<div class="t" style="top:698.10px;font-size:25px;color:#000;left:265.30px;transform:scaleX(0.9550);transform-origin:0 0;">Покупатель</div>
<div class="t" style="top:698.10px;font-size:25px;color:#000;left:601.30px;transform:scaleX(0.9640);transform-origin:0 0;">9999999</div>
<div class="t" style="top:698.10px;font-size:25px;color:#000;left:1065.70px;transform:scaleX(0.9640);transform-origin:0 0;">3456</div>
<div class="t" style="top:735.60px;font-size:25px;color:#000;right:1900.80px;transform:scaleX(0.9640);transform-origin:100% 0;">6519</div>
<div class="t" style="top:735.60px;font-size:25px;color:#000;left:265.30px;transform:scaleX(0.9550);transform-origin:0 0;">Покупатель</div>
<div class="t" style="top:735.60px;font-size:25px;color:#000;left:601.30px;transform:scaleX(0.9640);transform-origin:0 0;">99999999</div>
<div class="t" style="top:735.60px;font-size:25px;color:#000;left:1065.70px;transform:scaleX(0.9640);transform-origin:0 0;">3457</div>
<div class="t" style="top:773.10px;font-size:25px;color:#000;right:1900.80px;transform:scaleX(0.9640);transform-origin:100% 0;">6520</div>
<div class="t" style="top:773.10px;font-size:25px;color:#000;left:265.30px;transform:scaleX(0.9550);transform-origin:0 0;">Покупатель</div>
<div class="t" style="top:773.10px;font-size:25px;color:#000;left:601.30px;transform:scaleX(0.9640);transform-origin:0 0;">99999999</div>
<div class="t" style="top:773.10px;font-size:25px;color:#000;left:1065.70px;transform:scaleX(0.9640);transform-origin:0 0;">4220</div>
<div class="t" style="top:810.60px;font-size:25px;color:#000;right:1900.80px;transform:scaleX(0.9640);transform-origin:100% 0;">6521</div>
<div class="t" style="top:810.60px;font-size:25px;color:#000;left:265.30px;transform:scaleX(0.9560);transform-origin:0 0;">Покупатель ИА</div>
<div class="t" style="top:810.60px;font-size:25px;color:#000;left:601.30px;transform:scaleX(0.9640);transform-origin:0 0;">44444444</div>
<div class="t" style="top:810.60px;font-size:25px;color:#000;left:1065.70px;transform:scaleX(0.9640);transform-origin:0 0;">6403</div>
<div class="t" style="top:848.10px;font-size:25px;color:#000;right:1900.80px;transform:scaleX(0.9640);transform-origin:100% 0;">6522</div>
<div class="t" style="top:848.10px;font-size:25px;color:#000;left:265.30px;transform:scaleX(0.9454);transform-origin:0 0;">Покупатель Сайт</div>
<div class="t" style="top:848.10px;font-size:25px;color:#000;left:601.30px;transform:scaleX(0.9640);transform-origin:0 0;">55555555</div>
<div class="t" style="top:848.10px;font-size:25px;color:#000;left:1065.70px;transform:scaleX(0.9640);transform-origin:0 0;">6340</div>
<div class="t" style="top:885.60px;font-size:25px;color:#000;right:1900.80px;transform:scaleX(0.9640);transform-origin:100% 0;">6527</div>
<div class="t" style="top:885.60px;font-size:25px;color:#000;left:265.30px;transform:scaleX(0.9591);transform-origin:0 0;">Покупець (Баггаутівська)</div>
<div class="t" style="top:885.60px;font-size:25px;color:#000;left:601.30px;transform:scaleX(0.9640);transform-origin:0 0;">99999999</div>
<div class="t" style="top:885.60px;font-size:25px;color:#000;left:1065.70px;transform:scaleX(0.9640);transform-origin:0 0;">2672</div>
<div class="t" style="top:923.10px;font-size:25px;color:#000;right:1900.80px;transform:scaleX(0.9640);transform-origin:100% 0;">6528</div>
<div class="t" style="top:923.10px;font-size:25px;color:#000;left:265.30px;transform:scaleX(0.9575);transform-origin:0 0;">Поліщук Ольга Олександро...</div>
<div class="t" style="top:923.10px;font-size:25px;color:#000;left:1065.70px;transform:scaleX(0.9640);transform-origin:0 0;">5399</div>
<div class="t" style="top:960.60px;font-size:25px;color:#000;right:1900.80px;transform:scaleX(0.9640);transform-origin:100% 0;">6529</div>
<div class="t" style="top:960.60px;font-size:25px;color:#000;left:265.30px;transform:scaleX(0.9080);transform-origin:0 0;">Понамарев В</div>
<div class="t" style="top:960.60px;font-size:25px;color:#000;left:1065.70px;transform:scaleX(0.9640);transform-origin:0 0;">5518</div>
<div class="t" style="top:998.10px;font-size:25px;color:#000;right:1900.80px;transform:scaleX(0.9640);transform-origin:100% 0;">6530</div>
<div class="t" style="top:998.10px;font-size:25px;color:#000;left:265.30px;transform:scaleX(0.9330);transform-origin:0 0;">Попова Віра Николаївна</div>
<div class="t" style="top:998.10px;font-size:25px;color:#000;left:601.30px;transform:scaleX(0.9640);transform-origin:0 0;">3032203909</div>
<div class="t" style="top:998.10px;font-size:25px;color:#000;left:1065.70px;transform:scaleX(0.9640);transform-origin:0 0;">3790</div>
<div class="t" style="top:1035.60px;font-size:25px;color:#000;right:1900.80px;transform:scaleX(0.9640);transform-origin:100% 0;">6531</div>
<div class="t" style="top:1035.60px;font-size:25px;color:#000;left:265.30px;transform:scaleX(0.9196);transform-origin:0 0;">Попова Елена Владимировна</div>
<div class="t" style="top:1035.60px;font-size:25px;color:#000;left:1065.70px;transform:scaleX(0.9640);transform-origin:0 0;">5469</div>
<div class="t" style="top:1073.10px;font-size:25px;color:#000;right:1900.80px;transform:scaleX(0.9640);transform-origin:100% 0;">6532</div>
<div class="t" style="top:1073.10px;font-size:25px;color:#000;left:265.30px;transform:scaleX(0.9245);transform-origin:0 0;">ПОРТТРАНСБУД&quot;ТОВ</div>
<div class="t" style="top:1073.10px;font-size:25px;color:#000;left:601.30px;transform:scaleX(0.9640);transform-origin:0 0;">39825870</div>
<div class="t" style="top:1073.10px;font-size:25px;color:#000;left:1065.70px;transform:scaleX(0.9640);transform-origin:0 0;">6492</div>
<div class="t" style="top:1110.60px;font-size:25px;color:#000;right:1900.80px;transform:scaleX(0.9640);transform-origin:100% 0;">6533</div>
<div class="t" style="top:1110.60px;font-size:25px;color:#000;left:265.30px;transform:scaleX(0.9550);transform-origin:0 0;">Посольство государства Із...</div>
<div class="t" style="top:1110.60px;font-size:25px;color:#000;left:601.30px;transform:scaleX(0.9640);transform-origin:0 0;">000000000</div>
<div class="t" style="top:1110.60px;font-size:25px;color:#000;left:1065.70px;transform:scaleX(0.9640);transform-origin:0 0;">4026</div>
<div class="t" style="top:1148.10px;font-size:25px;color:#000;right:1900.80px;transform:scaleX(0.9640);transform-origin:100% 0;">6534</div>
<div class="t" style="top:1148.10px;font-size:25px;color:#000;left:265.30px;transform:scaleX(0.9314);transform-origin:0 0;">Посольство Израиля</div>
<div class="t" style="top:1148.10px;font-size:25px;color:#000;left:1065.70px;transform:scaleX(0.9640);transform-origin:0 0;">4037</div>
<div class="t" style="top:1185.60px;font-size:25px;color:#000;right:1900.80px;transform:scaleX(0.9640);transform-origin:100% 0;">6535</div>
<div class="t" style="top:1185.60px;font-size:25px;color:#000;left:265.30px;transform:scaleX(0.9628);transform-origin:0 0;">Посольство Ізраилю - Конс...</div>
<div class="t" style="top:1185.60px;font-size:25px;color:#000;left:1065.70px;transform:scaleX(0.9640);transform-origin:0 0;">5077</div>
<div class="t" style="top:1228.00px;font-size:23.5px;color:#111;left:267.50px;transform:scaleX(1.0253);transform-origin:0 0;">Запис 722 із 2252</div>
<div class="t" style="top:1290.70px;font-size:16.5px;color:#111;left:28.70px;transform:scaleX(1.0300);transform-origin:0 0;">Показувати деталі</div>
<div class="t" style="top:1322.00px;font-size:16.5px;color:#111;left:9.30px;transform:scaleX(0.9808);transform-origin:0 0;">Головна</div>
<div class="t" style="top:1322.00px;font-size:16.5px;color:#111;left:199.20px;transform:scaleX(0.9031);transform-origin:0 0;">Фірми</div>
<div class="t" style="top:1359.00px;font-size:16.5px;color:#000;left:30.50px;transform:scaleX(0.9932);transform-origin:0 0;">База даних: TASA3@TITAN</div>
<div class="t" style="top:1359.00px;font-size:16.5px;color:#000;left:329.80px;transform:scaleX(0.9577);transform-origin:0 0;">Користувач: GIFT</div>
<div class="t" style="top:1359.00px;font-size:16.5px;color:#000;left:635.00px;">1</div>
<div class="t" style="top:1359.00px;font-size:16.5px;color:#000;left:666.00px;transform:scaleX(0.9790);transform-origin:0 0;">Касовий апарат: Samsung ER-350 №123456</div>
<div class="t" style="top:1359.00px;font-size:16.5px;color:#000;left:1122.70px;transform:scaleX(0.9746);transform-origin:0 0;">Зона: Склад [1]</div>
<svg style="position:absolute;left:0;top:0" width="2159" height="1380"><polygon points="194.1,190.5 197.8,206.3 199.3,200.3 622.8,678.8 622.8,678.8 203.2,196.9 209.2,196.2" fill="#f20000" stroke="#f20000" stroke-width="1.9" stroke-linejoin="round"/></svg>
</body></html>
